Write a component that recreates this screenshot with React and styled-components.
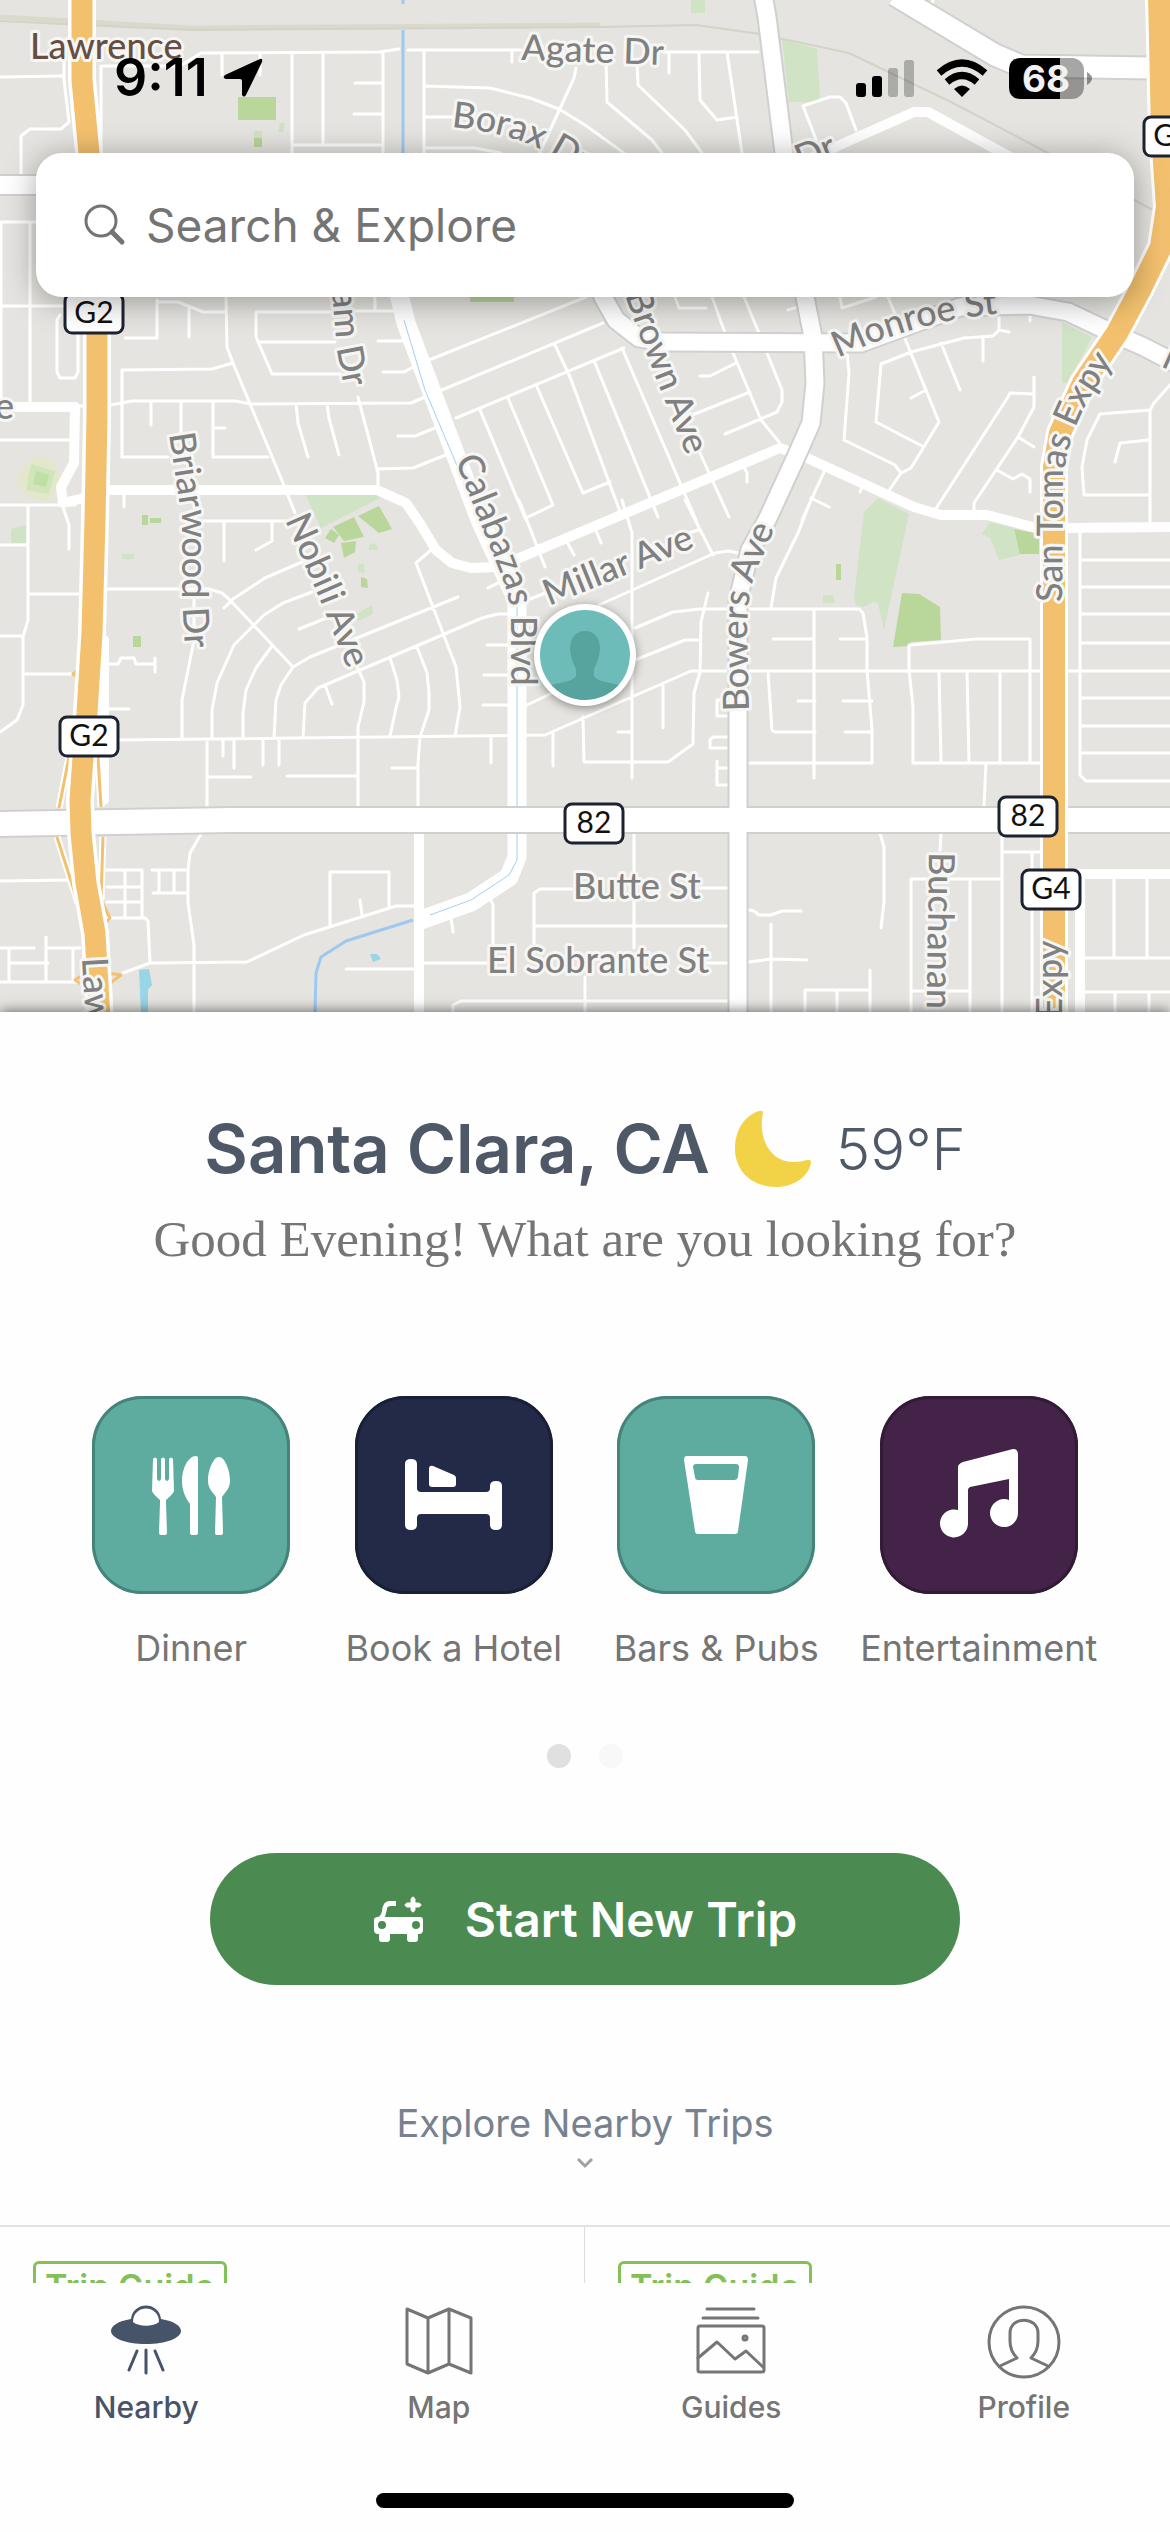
import { useState } from 'react';
import styled, { createGlobalStyle } from 'styled-components';

const minorRoads = [
  // north of the search box
  'M0 77L62 76M64 60V80L69 122L61 129H30L21 136V175M101 150V66M103 66H180L201 53L379 52L399 49',
  'M222 53V75M260 53V75M292 53V153M323 53V145M383 52V153M292 145H383M355 83H383M354 114H383',
  'M408 50H521M512 50V62M424 50V153M424 86L490 88L530 98L559 109L585 125L624 153M424 117H455',
  'M424 148H475L501 153M576 68L574 78L540 152M664 52H758M669 53V73M699 53L700 100L717 120L737 117',
  'M727 52L742 153M606 60L607 102L652 140L662 153M637 60L638 85L685 130L702 153',
  'M803 106L830 97L840 97L846 103L856 130M803 106L819 147M933 0L929 14',
  // between G2 and Calabazas
  'M0 222H36M1 222V400M30 222V403M0 306H64M60 315L57 320V372L60 378H75L78 372V334M0 440H72',
  'M157 300V338H125M157 302H178L203 312H226M189 308V337M226 297L227 347L233 363L283 483L295 513',
  'M168 457H122V370L212 369L233 363M111 405L132 401H235L251 404L411 403L425 397',
  'M151 401V425M181 401V433M213 401V457H268M213 428H225M296 404L298 423L308 457M327 404L329 418L339 455',
  'M358 397L378 473V485M377 469L413 468L448 454M398 436H415L440 426M383 372H404L413 367M378 341H402',
  'M333 312H256V337L272 374H341M258 342H335M354 311H396M375 297V310M78 406H85',
  // grid around Brown Ave
  'M429 360L586 297M442 390L603 323M456 418L624 348M480 410L526 520M508 398L553 505L526 518',
  'M537 387L583 493L610 482M555 345L570 377L622 517M595 363L658 517M622 348L696 520M700 453L729 517',
  'M519 500L545 567M566 540L574 555M675 297L679 308H706M712 297L725 333M744 297L759 333',
  'M767 353L782 390V402L777 412L725 434M733 353L761 420L779 442M700 376H710L736 363M692 415L750 392M788 310L798 307',
  // east of Bowers
  'M840 297L842 308L876 297M888 297L939 422L911 468L901 473L888 492M847 353L849 373L844 440L895 465L901 473',
  'M924 447L876 422L881 364L911 352L964 338L993 336L999 330V313M999 330L1009 332M941 343L960 390M911 398L926 390M983 338V361M1030 313V321',
  'M935 510L1008 397L1010 393L1034 394M1034 377V407L1018 437L974 503V512M1018 437L1034 447M997 470L1013 479L1022 474L1030 479V492',
  'M744 467L747 473V482M824 472L802 520M811 498L829 507M860 492L862 487M811 500L798 533L776 578L771 608',
  'M1170 385L1154 403L1150 410V525M1150 410L1100 414L1087 440L1082 467L1084 495H1150M1115 462L1120 443L1148 440',
  // west side, lower half
  'M0 505H75M28 505V620L23 637V705L17 720L0 732M63 507L69 525V549M0 545H28M28 594H78M0 636H23M23 674H75',
  'M124 490V507M200 521H286M224 521V561M272 521V541L256 550M108 589H209L222 593L230 600L293 667M224 608L233 599L265 578L302 562',
  'M212 738V710L217 683L234 645L264 615L283 603L312 592M243 738V713L246 690L256 668L272 646',
  'M274 738L276 700L281 685L293 667L310 657L458 597M303 738L305 703L318 688L482 618L498 614H507M299 629L329 617',
  'M194 597V640L182 700V738M354 660L364 682V702L358 727V807M390 658L397 680L399 697L396 708L390 736',
  'M417 647L427 673L429 693V710L420 737L418 763V807M431 550L416 563L456 667L460 707L455 736M325 685L332 704',
  'M108 664H118L121 658H134L136 664H155M155 658V672M108 709H129M119 740L545 735L691 671H1042',
  'M207 740V807M223 740V756M234 740V768M263 740V765M279 740V765M207 777H251M287 776H358M392 768H418M491 736V763M553 733V766',
  'M488 588L502 581M487 645H508M484 675H508M483 705H508M525 706L552 693M520 603L548 592',
  // blocks around the pin and Bowers
  'M583 717L584 762H668L693 744L694 693L700 672L701 622L708 593M622 500L632 533V778M618 732H632M663 683V728',
  'M635 628L673 612L700 609H859L863 613L867 638V670L872 730V763H749M635 660L685 640H700M599 605L715 553L729 551L738 553',
  'M685 500L713 555M673 538L698 530M595 528L601 543M814 610V778M773 639H814M840 639H867M798 701H815M843 701H872',
  'M768 672L772 730L775 732H815M845 732H872M727 700H717V716H727M727 737H713L710 740V748H727M717 761V785H727M717 768H727',
  'M909 645V670L913 707V763H1042M911 645L976 639H1030V762M939 672L941 762M967 672L969 762M1000 672V763M986 763L984 807',
  'M1080 530V775L1086 781H1170M1080 560H1170M1080 587H1170M1080 614H1170M1080 643H1170M1067 671H1170M1080 698H1170M1080 726H1170M1080 753H1170',
  // south of route 82
  'M1114 880V957M1147 880V957M1085 958H1170M1085 992H1170M1115 992V1013M1149 992V1013M1002 837V1013M1004 852H1040M1032 852V1013',
  'M911 1013V879H1001M970 880V1013M911 991H970M941 833L940 850M880 833L884 847V902L881 928',
  'M749 910L754 911L759 915H771L782 911H801M771 924V1013M749 962L771 959L807 960M805 1013V990H870M870 970V1013M837 990V1013',
  'M634 833V948M534 926H729M700 888H729M534 948V893L540 889H572M706 963H729M424 963H486M453 1013V1005L461 1001H729M585 977V1013',
  'M490 898L493 905V948M451 918L453 932M346 969H415M201 834L190 853L188 870V903L194 945V1013',
  'M107 870H142V917M125 870V918M107 887H142M107 902H142M106 918H145L148 921L150 963M152 870H188M159 870V893M174 870V893M153 893H188',
  'M123 973L150 963L247 962L304 935L396 906H415M330 925V872H389V906M360 900L362 915',
  'M0 881L70 880M0 948H34M46 937V981M46 948H80M0 982H78M9 948V981M9 963H48M73 948V980',
];

const mediumRoads = [
  'M111 490H377L406 503L421 525L436 550L452 563L471 568L498 567L780 448L807 458L914 507L941 515H987L1040 529L1067 528L1170 527',
  'M0 407H75L74 463L61 487L63 503L84 498',
  'M815 156L914 112H928L1010 157',
  'M419 833V1013',
  'M1080 1013V874H1170',
  'M104 640V800',
];

const largeRoads = [
  { d: 'M763 -5L767 17L784 153L805 297L813 337L815 383L811 423L796 457L767 520L750 550L738 600V1020', width: 17 },
  { d: 'M895 -5L995 55L1021 66L1152 68', width: 21 },
  { d: 'M590 265L603 297L616 320L639 338L662 342L861 343L960 307L1029 305L1068 312L1106 330L1144 347L1175 363', width: 17 },
  { d: 'M-5 185H60', width: 18 },
  { d: 'M-5 824L230 820H1175', width: 24 },
];

const g2 = 'M82 -5V80L89 153L97 333V417L95 520L92 633L87 713L83 757L80 800L81 833L86 883L95 933L100 1020';
const sanTomas = 'M1159 -5L1162 133L1167 207L1161 247L1140 290L1117 333L1083 383L1060 433L1054 467V1020';
const calabazas = 'M398 290L406 323L480 520L517 600V857L509 877L471 902L421 920';

const greens = [
  { fill: '#b9d69b', d: 'M238 97H276V120H238ZM254 138H262V147H254ZM470 297H514V302H470ZM379 506L392 529L379 533L358 516ZM354 517L364 537L344 541L333 527ZM341 543L356 541L355 552L344 558ZM331 529L339 535L334 543L325 538Z' },
  { fill: '#b9d69b', d: 'M142 515H148V525H142ZM150 518H161V523H150ZM133 636H141V647H133ZM361 577L367 579L368 588L361 587ZM902 593L919 594L940 607L941 640L911 642L908 646L893 647ZM836 564H841V580H836ZM1014 529L1039 534V554H1019ZM799 55L805 57L803 67L797 65Z' },
  { fill: '#d1e3c5', d: 'M305 494H388L321 528ZM254 131H262V138H254ZM280 123H285L283 132H278ZM122 554H134V559H122ZM369 545L376 543L378 550H369ZM358 564H364L365 573L358 572ZM355 615L372 605L373 614L358 621ZM11 529L26 525V543H11Z' },
  { fill: '#d1e3c5', d: 'M878 498L909 514L884 630L878 603L873 602L863 607L856 605L854 598L864 512ZM823 595H833L835 603H823ZM990 522L1014 528L1020 555L999 560L990 538L982 534ZM782 39L817 49L820 98L815 102H789ZM691 0H705V13H691ZM1062 322L1092 337L1068 383H1062Z' },
  { fill: '#e3e8cd', d: 'M36 456L52 459L63 481L47 502L31 498L17 486L20 469Z' },
  { fill: '#d0e5b8', d: 'M31 464L55 471L49 494L26 490Z' },
  { fill: '#bfe0a5', d: 'M36 471L49 475L46 487L33 484Z' },
  { fill: '#98d5e5', d: 'M139 970L149 969L152 985L148 990V1013H141ZM370 954H377L381 959L373 962Z' },
];

const streetLabels = [
  { name: 'Agate Dr', path: 'M521 60L690 66' },
  { name: 'Borax Dr', path: 'M451 127Q505 132 540 149L630 200' },
  { name: 'Dr', path: 'M801 171L860 147' },
  { name: 'am Dr', path: 'M332 291L337 350L352 430' },
  { name: 'Briarwood Dr', path: 'M169 434L182 520V593L186 670' },
  { name: 'Nobili Ave', path: 'M285 520L318 595L360 700' },
  { name: 'Calabazas Blvd', path: 'M455 460L494 557Q511 597 511 617V740' },
  { name: 'Brown Ave', path: 'M625 295L641 340L700 490' },
  { name: 'Millar Ave', path: 'M549 606L700 545' },
  { name: 'Bowers Ave', path: 'M749 711L747 633Q747 595 757 570L795 480' },
  { name: 'Monroe St', path: 'M838 358Q925 317 1020 312' },
  { name: 'San Tomas Expy', path: 'M1062 602L1063 480Q1068 430 1096 388L1150 305' },
  { name: 'Expy', path: 'M1062 1018V900' },
  { name: 'Law', path: 'M82 958L88 1060' },
  { name: 'Buchanan', path: 'M929 852L926 1060' },
  { name: 'Butte St', path: 'M573 899H760' },
  { name: 'El Sobrante St', path: 'M487 973H760' },
  { name: 'e', path: 'M-5 419H60' },
  { name: 'M', path: 'M1160 366L1240 402' },
];

const shields = [
  { text: 'G2', x: 64, y: 293 },
  { text: 'G2', x: 59, y: 716 },
  { text: '82', x: 564, y: 803 },
  { text: '82', x: 998, y: 796 },
  { text: 'G4', x: 1021, y: 869 },
  { text: 'G4', x: 1143, y: 116 },
];

const CityMap = () => (
  <MapDrawing viewBox="0 0 1170 1012" preserveAspectRatio="xMidYMin slice" aria-label="Map of Santa Clara">
    {greens.map(({ fill, d }) => (
      <path key={d} fill={fill} d={d} />
    ))}

    <g fill="none" strokeLinejoin="round">
      <path stroke="#dad9cc" strokeWidth="5" d="M0 17L191 28L600 25" />
      <path stroke="#d5d3c6" strokeWidth="2" d="M0 21L191 30L600 27L696 25L760 34L849 53L953 103L1048 153L1160 214" />
      <path stroke="#9dc9f1" strokeWidth="3" d="M403 0V4M403 30V160M413 920L346 941L321 957L316 973L315 1013" />

      <path stroke="#ffffff" strokeWidth="3" strokeLinecap="round" d={minorRoads.join('')} />
      <path stroke="#ffffff" strokeWidth="10" strokeLinecap="round" d={mediumRoads.join('')} />

      <path stroke="#ffffff" strokeWidth="19" d={calabazas} />
      <path stroke="#a5cff2" strokeWidth="1" d="M404 320L425 390L480 520L517 603V860L509 875L471 900L430 915" />

      {largeRoads.map(({ d, width }) => (
        <path key={d} stroke="#d0d0d0" strokeWidth={width + 4} d={d} />
      ))}
      {largeRoads.map(({ d, width }) => (
        <path key={d} stroke="#ffffff" strokeWidth={width} d={d} />
      ))}

      <path stroke="#ffffff" strokeWidth="7" d="M69 757L59 808M98 757L101 807M57 837L78 903M103 837L101 900" />
      <path stroke="#f3c16e" strokeWidth="3" d="M69 757L59 808M98 757L101 807M57 837L78 903M103 837L101 900L110 918L103 925M84 974L75 980L84 986M108 973L121 975L109 984M78 670L73 674L78 678" />
      <path stroke="#ffffff" strokeWidth="28" d={g2} />
      <path stroke="#f3c16e" strokeWidth="21" d={g2} />
      <path stroke="#ffffff" strokeWidth="28" d={sanTomas} />
      <path stroke="#f3c16e" strokeWidth="22" d={sanTomas} />
    </g>

    <StationLabel x="30" y="59">Lawrence</StationLabel>

    {streetLabels.map(({ name, path }, index) => (
      <g key={path}>
        <path id={`street-${index}`} fill="none" d={path} />
        <StreetLabel>
          <textPath href={`#street-${index}`}>{name}</textPath>
        </StreetLabel>
      </g>
    ))}

    {shields.map(({ text, x, y }) => (
      <g key={`${x}-${y}`}>
        <rect x={x + 1} y={y + 1} width="58" height="39" rx="7" fill="#ffffff" stroke="#1c2230" strokeWidth="3" />
        <ShieldText x={x + 30} y={y + 30}>{text}</ShieldText>
      </g>
    ))}

    <Pin>
      <circle cx="585" cy="655" r="51" fill="#ffffff" />
      <clipPath id="pin-face">
        <circle cx="585" cy="655" r="45" />
      </clipPath>
      <g clipPath="url(#pin-face)">
        <rect x="540" y="610" width="90" height="90" fill="#6dbcb9" />
        <path
          fill="#57a49f"
          d="M585 631C575 631 570 639 570 649C571 660 574 664 576 669V676C573 682 560 682 548 686V705H622V686C610 682 597 682 594 676V669C596 664 599 660 600 649C600 639 595 631 585 631Z"
        />
      </g>
    </Pin>
  </MapDrawing>
);

const StatusIcons = () => (
  <svg width="236" height="46" viewBox="856 54 236 46" aria-hidden="true">
    <rect x="856" y="82" width="10" height="14" rx="3" />
    <rect x="872" y="75" width="10" height="21" rx="3" />
    <rect x="888" y="67" width="10" height="29" rx="3" opacity=".25" />
    <rect x="904" y="59" width="10" height="37" rx="3" opacity=".25" />
    <g fill="none" stroke="#000000" strokeWidth="7">
      <path d="M939 72Q962 52 985 72" />
      <path d="M947 81Q962 68 977 81" />
    </g>
    <path d="M962 96L954 88Q962 81 970 88Z" />
    <rect x="1009" y="57" width="75" height="41" rx="12" opacity=".35" />
    <path d="M1060 57H1021Q1009 57 1009 69V86Q1009 98 1021 98H1060Z" />
    <path d="M1087 71Q1092 74 1092 77Q1092 81 1087 84Z" opacity=".4" />
    <BatteryText x="1046" y="91">68</BatteryText>
  </svg>
);

const DinnerIcon = () => (
  <>
    <path d="M61 63Q63 60 65 63V83Q67 87 69 83V63Q71 60 73 63V83Q75 87 77 83V63Q79 60 81 63L82 95Q81 98 74 104V107L75 137Q75 139 73 139H69Q67 139 67 137L68 107V104Q61 98 60 95Z" />
    <path d="M106 62V137Q106 139 104 139H100Q98 139 98 137V108C92 100 90 92 90 85C90 73 96 60 104 60Q106 60 106 62Z" />
    <path d="M127 61C121 61 116 75 116 84C116 92 119 94 124 101L123 137Q123 139 125 139H129Q131 139 131 137L130 101C135 94 138 92 138 84C138 75 133 61 127 61Z" />
  </>
);

const HotelIcon = () => (
  <>
    <path d="M50 68Q50 63 56 63Q62 63 62 68V92Q62 96 66 96H131Q135 96 135 92V90Q135 85 141 85Q147 85 147 90V129Q147 134 141 134Q135 134 135 129V122Q135 118 131 118H66Q62 118 62 122V129Q62 134 56 134Q50 134 50 129Z" />
    <path d="M74 73Q74 69 78 70L99 79Q101 80 101 82V88Q101 91 98 91H77Q74 91 74 88Z" />
  </>
);

const PubIcon = () => (
  <path
    fillRule="evenodd"
    d="M70 60H128Q131 60 131 64L121 135Q121 138 118 138H81Q78 138 78 135L67 64Q67 60 70 60ZM79 68Q76 68 76 71L78 81Q78 84 81 84H118Q120 84 121 81L122 71Q122 68 119 68Z"
  />
);

const MusicIcon = () => (
  <path d="M83 66L133 53Q138 53 138 58V117A14 14 0 1 1 129 104V83L90 91Q88 92 88 94V127A14 14 0 1 1 78 114V71Q78 68 83 66Z" />
);

const NearbyIcon = () => (
  <>
    <path d="M22 14C24 -4 50 -4 52 14C65 16 72 21 72 26C72 33 57 39 37 39S2 33 2 26C2 21 9 16 22 14Z" fill="currentColor" stroke="none" />
    <path d="M24 17C24 -1 50 -1 50 17C44 22 30 22 24 17Z" fill="#ffffff" stroke="none" />
    <path d="M28 46L20 65M37 45V68M46 46L54 65" />
  </>
);

const MapIcon = () => (
  <path d="M5 4L26 13L47 4L69 13V68L47 59L26 68L5 59ZM26 13V68M47 4V59" />
);

const GuidesIcon = () => (
  <>
    <path d="M13 4H60M9 13H64M4 53L23 37L41 54L52 46L69 62" />
    <rect x="4" y="21" width="66" height="46" rx="2" />
    <circle cx="51" cy="33" r="2" />
  </>
);

const ProfileIcon = () => (
  <>
    <circle cx="37" cy="37" r="35" />
    <path d="M13 61L30 53C25 48 23 42 23 36V28C23 11 51 11 51 28V36C51 42 49 48 44 53L61 61" />
  </>
);

const categories = [
  { name: 'Dinner', color: '#5eaca0', border: '#468379', Icon: DinnerIcon },
  { name: 'Book a Hotel', color: '#222a47', border: '#192036', Icon: HotelIcon },
  { name: 'Bars & Pubs', color: '#5eaca0', border: '#468379', Icon: PubIcon },
  { name: 'Entertainment', color: '#442349', border: '#331a37', Icon: MusicIcon },
];

const tabs = [
  { name: 'Nearby', Icon: NearbyIcon },
  { name: 'Map', Icon: MapIcon },
  { name: 'Guides', Icon: GuidesIcon },
  { name: 'Profile', Icon: ProfileIcon },
];

const App = () => {
  const [search, setSearch] = useState('');
  const [activeTab, setActiveTab] = useState('Nearby');

  return (
    <Screen>
      <GlobalStyle />

      <Content>
        <MapArea>
          <CityMap />
          <MapOverlay>
            <StatusBar>
              <Clock>
                9:11
                <svg width="42" height="42" viewBox="0 0 42 42" aria-hidden="true">
                  <path d="M38 2Q41 1 40 5L24 38Q22 41 20 38V24Q20 22 18 22H4Q0 21 3 18Z" />
                </svg>
              </Clock>
              <StatusIcons />
            </StatusBar>

            <SearchBox>
              <svg width="42" height="42" viewBox="0 0 42 42" fill="none" stroke="#747474" aria-hidden="true">
                <circle cx="17" cy="17" r="15" strokeWidth="3" />
                <path d="M28 28L38 38" strokeWidth="5" strokeLinecap="round" />
              </svg>
              <input
                type="text"
                aria-label="Search & Explore"
                placeholder="Search & Explore"
                value={search}
                onChange={(event) => setSearch(event.target.value)}
              />
            </SearchBox>
          </MapOverlay>
        </MapArea>

        <Sheet>
          <Heading>
            <h1>Santa Clara, CA</h1>
            <svg width="78" height="78" viewBox="0 0 78 78" fill="#f2d347" aria-hidden="true">
              <path d="M25 1Q29 0 29 3C24 25 34 52 60 52Q67 52 73 50Q77 49 77 53C74 67 60 77 42 77C18 77 1 61 1 39C1 20 10 6 25 1Z" />
            </svg>
            <Temperature>59°F</Temperature>
          </Heading>
          <Greeting>Good Evening! What are you looking for?</Greeting>

          <CategoryList>
            {categories.map(({ name, color, border, Icon }) => (
              <Category key={name} type="button">
                <CategoryTile $color={color} $border={border}>
                  <svg viewBox="0 0 198 198" fill="#ffffff" aria-hidden="true">
                    <Icon />
                  </svg>
                </CategoryTile>
                <span>{name}</span>
              </Category>
            ))}
          </CategoryList>

          <Dots>
            <Dot $active />
            <Dot />
          </Dots>

          <TripButton type="button">
            <svg width="52" height="50" viewBox="0 0 52 50" fill="#ffffff" aria-hidden="true">
              <path d="M38 9V5Q40 1 42 5V9H46Q50 11 46 13H42V16Q40 20 38 16V13H34Q30 11 34 9Z" stroke="#ffffff" strokeWidth="1" />
              <path
                fillRule="evenodd"
                d="M23 7V12H18Q14 12 14 15L12 23H47Q50 23 50 26V36Q50 39 47 40H45V45Q45 48 42 48H37Q34 48 34 45V40H17V45Q17 48 14 48H9Q6 48 6 45V40H4Q1 39 1 36V26Q1 23 5 23Q8 22 9 17Q10 7 16 7ZM9 27A4 4 0 1 0 9 35A4 4 0 1 0 9 27ZM43 27A4 4 0 1 0 43 35A4 4 0 1 0 43 27Z"
              />
            </svg>
            Start New Trip
          </TripButton>

          <ExploreLink href="#trips">
            Explore Nearby Trips
            <svg width="18" height="12" viewBox="0 0 18 12" fill="none" stroke="#a0a0a0" strokeWidth="3" aria-hidden="true">
              <path d="M2 2L9 9L16 2" />
            </svg>
          </ExploreLink>
        </Sheet>

        <TripGrid id="trips">
          <TripCard>
            <Badge>Trip Guide</Badge>
          </TripCard>
          <TripCard>
            <Badge>Trip Guide</Badge>
          </TripCard>
        </TripGrid>
      </Content>

      <BottomBar>
        <TabList>
          {tabs.map(({ name, Icon }) => (
            <Tab
              key={name}
              type="button"
              $active={name === activeTab}
              onClick={() => setActiveTab(name)}
            >
              <svg
                width="74"
                height="74"
                viewBox="0 0 74 74"
                fill="none"
                stroke="currentColor"
                strokeWidth="3"
                strokeLinecap="round"
                strokeLinejoin="round"
                aria-hidden="true"
              >
                <Icon />
              </svg>
              {name}
            </Tab>
          ))}
        </TabList>
        <HomeIndicator />
      </BottomBar>
    </Screen>
  );
};

const GlobalStyle = createGlobalStyle`
  * {
    box-sizing: border-box;
  }

  body {
    margin: 0;
    background-color: #fefefe;
    font-family: Inter, 'Liberation Sans', sans-serif;
  }

  button {
    padding: 0;
    border: none;
    background: none;
    font-family: inherit;
    cursor: pointer;
  }

  svg {
    flex-shrink: 0;
  }
`;

const Screen = styled.div`
  display: flex;
  flex-direction: column;
  height: 100vh;
`;

const Content = styled.main`
  flex: 1;
  min-height: 0;
  overflow: hidden;
`;

const MapArea = styled.section`
  display: grid;
  background-color: #e5e4e0;

  & > * {
    grid-area: 1 / 1;
  }
`;

const MapDrawing = styled.svg`
  display: block;
  width: 100%;
  height: auto;
`;

const StreetLabel = styled.text`
  font-family: Lato, sans-serif;
  font-size: 36px;
  font-weight: 500;
  fill: #808080;
  stroke: #f6f6f4;
  stroke-width: 6px;
  stroke-linejoin: round;
  paint-order: stroke;
`;

const StationLabel = styled(StreetLabel)`
  fill: #674e43;
`;

const ShieldText = styled.text`
  font-family: Lato, sans-serif;
  font-size: 30px;
  fill: #111111;
  text-anchor: middle;
`;

const Pin = styled.g`
  filter: drop-shadow(0 2px 5px rgba(0, 0, 0, 40%));
`;

const MapOverlay = styled.div`
  display: flex;
  flex-direction: column;
`;

const StatusBar = styled.header`
  display: flex;
  justify-content: space-between;
  align-items: center;
  padding: 48px 78px 45px 114px;
`;

const Clock = styled.div`
  display: flex;
  align-items: center;
  gap: 14px;
  font-size: 52px;
  font-weight: 600;
  line-height: 60px;
`;

const BatteryText = styled.text`
  font-size: 37px;
  font-weight: 700;
  fill: #f2f2f2;
  text-anchor: middle;
`;

const SearchBox = styled.label`
  display: flex;
  align-items: center;
  gap: 20px;
  height: 144px;
  margin: 0 36px;
  padding: 0 48px;
  background-color: white;
  border-radius: 26px;
  box-shadow: 0 4px 32px rgba(0, 0, 0, 35%);

  & > input {
    flex: 1;
    min-width: 0;
    padding: 0;
    border: none;
    outline: none;
    background: none;
    font-family: inherit;
    font-size: 46px;
    color: #747474;
  }

  & > input::placeholder {
    color: #747474;
    opacity: 1;
  }
`;

const Sheet = styled.section`
  position: relative;
  display: flex;
  flex-direction: column;
  align-items: center;
  padding: 97px 60px 56px;
  background-color: #fefefe;
  box-shadow: 0 -1px 12px rgba(0, 0, 0, 55%);
  clip-path: inset(-20px 0 0 0);
`;

const Heading = styled.div`
  display: flex;
  align-items: center;
  gap: 24px;
  line-height: 80px;
  white-space: nowrap;
  color: #4f5866;

  & > h1 {
    margin: 0;
    font-size: 67px;
    font-weight: 600;
  }
`;

const Temperature = styled.span`
  font-size: 58px;
  font-weight: 300;
`;

const Greeting = styled.p`
  margin: 20px 0 127px;
  font-family: 'Liberation Serif', serif;
  font-size: 51px;
  line-height: 60px;
  color: #757575;
`;

const CategoryList = styled.div`
  display: grid;
  grid-template-columns: repeat(4, 1fr);
  align-self: stretch;
`;

const Category = styled.button`
  display: flex;
  flex-direction: column;
  align-items: center;
  gap: 32px;
  font-size: 36px;
  line-height: 44px;
  white-space: nowrap;
  color: #757575;
`;

const CategoryTile = styled.span`
  display: block;
  width: 198px;
  height: 198px;
  background-color: ${(props) => props.$color};
  border-radius: 50px;
  box-shadow: inset 0 0 0 3px ${(props) => props.$border};
`;

const Dots = styled.div`
  display: flex;
  gap: 28px;
  margin: 74px 0 85px;
`;

const Dot = styled.span`
  width: 24px;
  height: 24px;
  border-radius: 50%;
  background-color: ${(props) => (props.$active ? '#e0e0e0' : '#f8f8f8')};
`;

const TripButton = styled.button`
  display: flex;
  justify-content: center;
  align-items: center;
  gap: 40px;
  width: 100%;
  max-width: 750px;
  height: 132px;
  background-color: #4b8b51;
  border-radius: 66px;
  font-size: 48px;
  font-weight: 600;
  color: white;
`;

const ExploreLink = styled.a`
  display: flex;
  flex-direction: column;
  align-items: center;
  gap: 10px;
  margin-top: 114px;
  font-size: 38px;
  line-height: 48px;
  color: #78818f;
  text-decoration: none;
`;

const TripGrid = styled.section`
  display: grid;
  grid-template-columns: 1fr 1fr;
  border-top: 2px solid #e2e2e2;
`;

const TripCard = styled.article`
  min-height: 300px;
  padding: 34px 33px;

  & + & {
    box-shadow: -1px 0 0 #dddddd;
  }
`;

const Badge = styled.span`
  display: inline-block;
  padding: 3px 9px;
  border: 3px solid #84c058;
  border-radius: 6px;
  font-size: 34px;
  font-weight: 600;
  line-height: 40px;
  color: #84c058;
`;

const BottomBar = styled.footer`
  display: flex;
  flex-direction: column;
  align-items: center;
  gap: 66px;
  padding: 22px 0 24px;
  background-color: #fefefe;
`;

const TabList = styled.nav`
  display: grid;
  grid-template-columns: repeat(4, 1fr);
  align-self: stretch;
`;

const Tab = styled.button`
  display: flex;
  flex-direction: column;
  align-items: center;
  gap: 8px;
  font-size: 30px;
  font-weight: 500;
  line-height: 40px;
  color: ${(props) => (props.$active ? '#465368' : '#757575')};
`;

const HomeIndicator = styled.div`
  width: 418px;
  height: 15px;
  border-radius: 8px;
  background-color: black;
`;

export default App;
